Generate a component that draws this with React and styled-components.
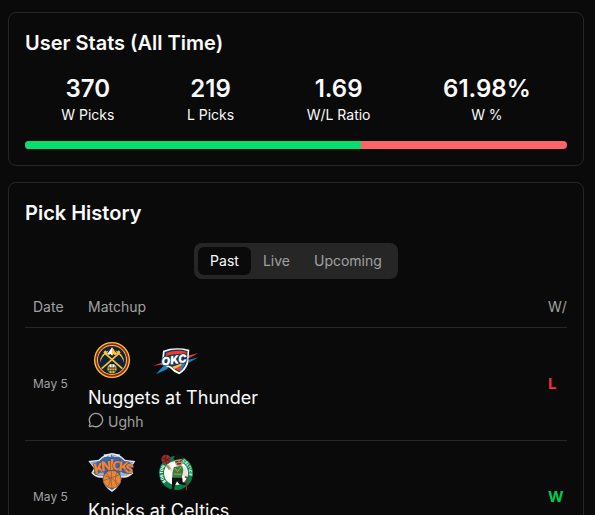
import React, { useState } from "react";
import styled, { createGlobalStyle } from "styled-components";
import { MessageCircle } from "lucide-react";

const GlobalStyle = createGlobalStyle`
  *, *::before, *::after { box-sizing: border-box; }
  html { background: #0a0a0a; scrollbar-width: none; }
  body {
    margin: 0;
    background: #0a0a0a;
    color: #fafafa;
    font-family: Inter, "Liberation Sans", sans-serif;
    font-size: 14px;
    line-height: 20px;
  }
`;

const Page = styled.main`
  display: flex;
  flex-direction: column;
  gap: 16px;
  padding: 12px 11px 12px 8px;
`;

const Card = styled.section`
  padding: 16px;
  border: 1px solid #262626;
  border-radius: 8px;
`;

const CardTitle = styled.h2`
  margin: 0;
  font-size: 20px;
  line-height: 28px;
  font-weight: 600;
`;

const StatList = styled.dl`
  display: flex;
  justify-content: space-around;
  margin: 16px 0;
`;

const Stat = styled.div`
  display: flex;
  flex-direction: column-reverse;
  text-align: center;
`;

const StatLabel = styled.dt`
  font-size: 14px;
  line-height: 20px;
`;

const StatValue = styled.dd`
  margin: 0;
  font-size: 24px;
  line-height: 32px;
  font-weight: 600;
`;

const RatioBar = styled.div`
  display: flex;
  height: 8px;
  overflow: hidden;
  border-radius: 4px;
  background: #ff6467;
`;

const RatioFill = styled.div`
  background: #05df72;
`;

const TabRow = styled.div`
  display: flex;
  justify-content: center;
  margin: 16px 0 8px;
`;

const TabList = styled.div`
  display: flex;
  padding: 4px;
  border-radius: 8px;
  background: #262626;
`;

const Tab = styled.button`
  padding: 4px 12px;
  border: 0;
  border-radius: 6px;
  font: inherit;
  cursor: pointer;
  background: ${(p) => (p.$active ? "#0a0a0a" : "transparent")};
  color: ${(p) => (p.$active ? "#fafafa" : "#a1a1a1")};
`;

const TableClip = styled.div`
  overflow: hidden;
`;

const Table = styled.table`
  width: calc(100% + 13px);
  table-layout: fixed;
  border-collapse: separate;
  border-spacing: 0;
`;

const HeadCell = styled.th`
  width: ${(p) => p.$width || "auto"};
  height: 41px;
  padding: 0 8px;
  border-bottom: 1px solid #262626;
  text-align: left;
  font-weight: 400;
  color: #a1a1a1;
`;

const Cell = styled.td`
  height: 113px;
  padding: 8px;
  border-bottom: 1px solid #262626;
  vertical-align: middle;
`;

const DateCell = styled(Cell)`
  font-size: 12px;
  white-space: nowrap;
  color: #a1a1a1;
`;

const MatchupCell = styled(Cell)`
  vertical-align: top;
`;

const ResultCell = styled(Cell)`
  font-size: 15px;
  font-weight: 700;
  color: ${(p) => (p.$win ? "#00c950" : "#fb2c36")};
`;

const Logos = styled.div`
  display: flex;
  gap: 16px;
`;

const Logo = styled.svg`
  display: block;
  width: 48px;
  height: 48px;
`;

const Matchup = styled.div`
  font-size: 18px;
  line-height: 28px;
`;

const Comment = styled.div`
  display: flex;
  align-items: center;
  gap: 4px;
  color: #a1a1a1;
`;

const CommentIcon = styled(MessageCircle)`
  width: 16px;
  height: 16px;
  margin-bottom: 4px;
`;

function Nuggets() {
  return (
    <Logo viewBox="0 0 144 144" role="img" aria-label="Nuggets">
      <circle cx="72" cy="72" r="54" fill="#fec524" />
      <circle cx="72" cy="72" r="50" fill="#8b2131" />
      <circle cx="72" cy="72" r="45" fill="#fec524" />
      <circle cx="72" cy="72" r="42" fill="#0e2240" />
      <path d="M41 98 92 53M103 98 52 53" stroke="#fec524" strokeWidth="5" />
      <path d="M36 80Q36 54 62 43L57 50Q42 60 36 80ZM108 80Q108 54 82 43L87 50Q102 60 108 80Z" fill="#fec524" />
      <path d="m46 49 6-6 8 9-6 6ZM98 49l-6-6-8 9 6 6Z" fill="#fec524" />
      <path d="m72 34 14 20-5 3-4-4-5 6-5-6-4 4-5-3Z" fill="#fff" />
      <path d="m72 34 14 20-5 3-4-4-5 6Z" fill="#fec524" />
      <circle cx="72" cy="98" r="14" fill="#fec524" />
      <path d="M61 89q11-8 22 0l-2 5H63Z" fill="#fff" />
      <path d="M58 96h28M60 104h24M72 84v28M62 87q8 11 0 22M82 87q-8 11 0 22" stroke="#0e2240" strokeWidth="2" fill="none" />
    </Logo>
  );
}

function Thunder() {
  return (
    <Logo viewBox="0 0 144 144" role="img" aria-label="Thunder">
      <path d="M3 90 44 74 46 83Z" fill="#ef3b24" />
      <path d="M12 115 32 92 54 82 46 99Z" fill="#1587cf" />
      <path d="m96 62 43-11-25 14-18 8Z" fill="#ef3b24" />
      <path d="m96 75 43-11-25 14-21 13Z" fill="#1587cf" />
      <path d="M33 44Q68 31 112 41L108 84Q101 103 82 115Q64 108 53 95L29 86Z" fill="#fff" />
      <path d="M38 48Q72 35 107 45L103 81Q97 98 82 109Q68 102 58 92L34 82Z" fill="#12345b" />
      <path d="M43 50Q73 40 104 47L102 57Q77 49 42 60Z" fill="#ef3b24" />
      <path d="M60 94Q80 94 102 74Q96 93 82 105Z" fill="#ef3b24" />
      <path d="M60 92Q82 89 101 69L100 79Q84 94 67 99Z" fill="#fdbb30" />
      <path d="m83 108 5-22 11-6q-5 19-16 28Z" fill="#1587cf" />
      <text x="28" y="84" transform="rotate(-8 65 70)" fontFamily="Inter, sans-serif" fontSize="34" fontWeight="900" fontStyle="italic" fill="#fff" stroke="#12345b" strokeWidth="5" paintOrder="stroke">OKC</text>
    </Logo>
  );
}

function Knicks() {
  return (
    <Logo viewBox="0 0 144 144" role="img" aria-label="Knicks">
      <path d="M1 36 32 32Q49 14 72 12Q95 14 111 32L142 36 127 60 136 73Q116 91 101 85Q99 112 72 129Q45 112 44 86Q24 89 10 72L18 58Z" fill="#e2e6eb" />
      <path d="M8 40 34 36Q50 20 72 16Q94 20 109 36L135 40 121 60 130 71Q114 83 98 79Q98 106 72 123Q46 106 47 80Q28 83 16 71L24 58Z" fill="#3867ad" />
      <path d="m6 40 20 0-5 14ZM118 40l18 0-12 17Z" fill="#a9b1b9" />
      <path d="M25 73q13 0 20-8l3 12q-10 6-23-2ZM97 66q11 12 27 5l-7 9q-12 3-20-2Z" fill="#a9b1b9" />
      <text x="72" y="25" textAnchor="middle" fontFamily="Inter, sans-serif" fontSize="9" fontWeight="700" fill="#fff">NEW YORK</text>
      <g fontFamily="Inter, sans-serif" fontWeight="800" fill="#f58426" stroke="#24509a" strokeWidth="3" paintOrder="stroke">
        <text x="16" y="73" fontSize="42" transform="rotate(-12 30 55)">K</text>
        <text x="39" y="66" fontSize="40" transform="rotate(-6 50 50)">N</text>
        <text x="65" y="64" fontSize="42">I</text>
        <text x="73" y="64" fontSize="38" transform="rotate(3 86 50)">C</text>
        <text x="92" y="67" fontSize="40" transform="rotate(8 103 52)">K</text>
        <text x="111" y="72" fontSize="38" transform="rotate(12 121 58)">S</text>
      </g>
      <circle cx="72" cy="91" r="27" fill="#f58426" stroke="#24509a" strokeWidth="2" />
      <path d="M49 80Q75 85 93 108M46 95Q72 86 95 77M71 64Q67 93 72 118M55 71Q76 94 58 114M87 69Q77 92 88 112" fill="none" stroke="#66586b" strokeWidth="2" />
    </Logo>
  );
}

function Celtics() {
  return (
    <Logo viewBox="0 0 144 144" role="img" aria-label="Celtics">
      <defs>
        <path id="boston-arc" d="M42 98A39 39 0 0 1 44 44" />
        <path id="celtics-arc" d="M90 37A39 39 0 0 1 101 98" />
      </defs>
      <circle cx="72" cy="72" r="51" fill="#008348" />
      <circle cx="72" cy="72" r="36" fill="#fff" />
      <g fontFamily="Inter, sans-serif" fontSize="12" fontWeight="800" fill="#fff">
        <text><textPath href="#boston-arc">BOSTON</textPath></text>
        <text><textPath href="#celtics-arc">CELTICS</textPath></text>
      </g>
      <circle cx="42" cy="31" r="14" fill="#9d2d2b" />
      <path d="M29 27q14 1 25 11M32 40q10-7 23-13M42 17q-5 14 2 28" fill="none" stroke="#3b1616" strokeWidth="2" />
      <path d="M45 52q0-8 7-7l7 15 8-7 20-5q16 5 18 18l1 19-8 3-7-17-5 14H64l-5-16q-9-5-14-17Z" fill="#e8e4d9" />
      <path d="m66 54 24-4 4 13-5 28-29-1 2-20Z" fill="#387e3e" />
      <path d="m69 57 8 11 11-15M66 75l22 1" fill="none" stroke="#c79b54" strokeWidth="3" />
      <path d="M60 86h31l1 14 10 3-2 6-18-3-7-9-7 15-2 15 7 4-2 4-14-3 3-19Z" fill="#101010" />
      <path d="m64 29 8-15 19 4 2 12-23 6Z" fill="#101010" />
      <path d="m67 34 22-5 5 12-9 11-13-3Z" fill="#b88c64" />
      <path d="m70 39 9-1m4-1 6-2m-14 10 12-1" stroke="#261a13" strokeWidth="3" />
      <path d="m99 83 6 3-2 38" fill="none" stroke="#8a2a22" strokeWidth="4" />
      <path d="m41 51 7-4 9 12-6 4Z" fill="#b88c64" />
    </Logo>
  );
}

const stats = [
  ["370", "W Picks"],
  ["219", "L Picks"],
  ["1.69", "W/L Ratio"],
  ["61.98%", "W %"],
];

const picks = [
  { date: "May 5", name: "Nuggets at Thunder", logos: [Nuggets, Thunder], comment: "Ughh", result: "L" },
  { date: "May 5", name: "Knicks at Celtics", logos: [Knicks, Celtics], result: "W" },
];

export default function App() {
  const [tab, setTab] = useState("Past");
  return (
    <>
      <GlobalStyle />
      <Page>
        <Card>
          <CardTitle>User Stats (All Time)</CardTitle>
          <StatList>
            {stats.map(([value, label]) => (
              <Stat key={label}>
                <StatLabel>{label}</StatLabel>
                <StatValue>{value}</StatValue>
              </Stat>
            ))}
          </StatList>
          <RatioBar>
            <RatioFill style={{ width: stats[3][0] }} />
          </RatioBar>
        </Card>
        <Card>
          <CardTitle>Pick History</CardTitle>
          <TabRow>
            <TabList role="tablist">
              {["Past", "Live", "Upcoming"].map((name) => (
                <Tab key={name} role="tab" aria-selected={tab === name} $active={tab === name} onClick={() => setTab(name)}>
                  {name}
                </Tab>
              ))}
            </TabList>
          </TabRow>
          <TableClip>
            <Table>
              <thead>
                <tr>
                  <HeadCell $width="55px">Date</HeadCell>
                  <HeadCell>Matchup</HeadCell>
                  <HeadCell $width="40px">W/L</HeadCell>
                </tr>
              </thead>
              <tbody>
                {picks.map((pick) => (
                  <tr key={pick.name}>
                    <DateCell>{pick.date}</DateCell>
                    <MatchupCell>
                      <Logos>
                        {pick.logos.map((TeamLogo, i) => (
                          <TeamLogo key={i} />
                        ))}
                      </Logos>
                      <Matchup>{pick.name}</Matchup>
                      {pick.comment && (
                        <Comment>
                          <CommentIcon strokeWidth={2} aria-hidden="true" />
                          {pick.comment}
                        </Comment>
                      )}
                    </MatchupCell>
                    <ResultCell $win={pick.result === "W"}>{pick.result}</ResultCell>
                  </tr>
                ))}
              </tbody>
            </Table>
          </TableClip>
        </Card>
      </Page>
    </>
  );
}
